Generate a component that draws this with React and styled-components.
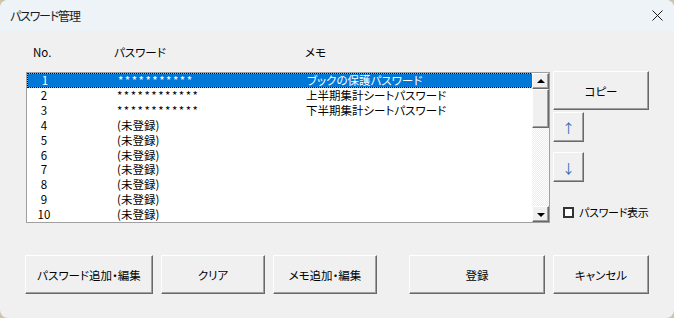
import React from "react"
import styled, { createGlobalStyle } from "styled-components"

const GlobalStyle = createGlobalStyle`
  html, body {
    margin: 0;
    padding: 0;
    background: #cdc4aa;
  }
  body {
    font-family: "Noto Sans CJK JP", "Noto Sans", sans-serif;
    font-feature-settings: "palt";
  }
`

const Window = styled.div`
  width: 674px;
  height: 318px;
  box-sizing: border-box;
  border-radius: 8px;
  overflow: hidden;
  background: #f0f0f0;
  display: flex;
  flex-direction: column;
`

const TitleBar = styled.div`
  height: 31px;
  flex: none;
  background: #eef3f8;
  display: flex;
  align-items: center;
  justify-content: space-between;
  padding: 0 11px 0 10px;
  font-size: 12px;
  letter-spacing: -1.2px;
  color: #1b1b1b;
`

const Body = styled.div`
  flex: 1;
  padding: 14px 25px 0 26px;
  display: flex;
  flex-direction: column;
  font-size: 11.5px;
  color: #000;
`

const HeaderRow = styled.div`
  display: grid;
  grid-template-columns: 81px 191px 1fr;
  padding-left: 7px;
  height: 14px;
  line-height: 14px;
  margin-bottom: 13px;
`

const MainRow = styled.div`
  display: flex;
  gap: 3px;
  align-items: flex-start;
`

const ListBox = styled.div`
  flex: none;
  width: 524px;
  height: 151px;
  box-sizing: border-box;
  border: 1px solid #a0a0a0;
  background: #fff;
  display: flex;
`

const Rows = styled.div`
  flex: 1;
  display: flex;
  flex-direction: column;
`

const Row = styled.div`
  display: grid;
  grid-template-columns: 90px 189px 1fr;
  height: 15px;
  line-height: 15px;
  box-sizing: border-box;
  white-space: nowrap;
  overflow: hidden;
  color: ${(p) => (p.$selected ? "#fff" : "#000")};
  ${(p) =>
    p.$selected &&
    `
    border: 1px dotted #000;
    line-height: 13px;
    margin: 0 -1px 0 0;
    background: linear-gradient(#0078d7, #0078d7) padding-box,
      linear-gradient(#e89a3c, #e89a3c) border-box;
  `}
`

const Num = styled.span`
  width: 34px;
  text-align: center;
`

const Stars = styled.span`
  letter-spacing: 1.5px;
`

const ScrollBar = styled.div`
  width: 17px;
  display: flex;
  flex-direction: column;
  background: repeating-conic-gradient(#fff 0 25%, #ececec 0 50%) 0 0 / 2px 2px;
`

const Bevel = styled.div`
  box-sizing: border-box;
  background: #f0f0f0;
  border-style: solid;
  border-width: 1px;
  border-color: #fff #696969 #696969 #fff;
  box-shadow: inset -1px -1px 0 #a0a0a0;
`

const ScrollButton = styled(Bevel)`
  height: 16px;
  display: flex;
  align-items: center;
  justify-content: center;
`

const Thumb = styled(Bevel)`
  height: 39px;
`

const Track = styled.div`
  flex: 1;
`

const Triangle = styled.span`
  width: 0;
  height: 0;
  border-left: 4px solid transparent;
  border-right: 4px solid transparent;
  ${(p) =>
    p.$down
      ? "border-top: 4px solid #000; margin-top: 1px;"
      : "border-bottom: 4px solid #000; margin-top: -1px;"}
`

const SideColumn = styled.div`
  flex: none;
  width: 96px;
  display: flex;
  flex-direction: column;
  align-items: flex-start;
  margin-top: -1px;
`

const Button = styled(Bevel)`
  width: ${(p) => p.$w}px;
  height: ${(p) => p.$h || 39}px;
  display: flex;
  align-items: center;
  justify-content: center;
  font-size: 11.5px;
  color: #000;
  margin-top: ${(p) => p.$mt || 0}px;
  margin-left: ${(p) => p.$ml || 0}px;
  flex: none;
`

const Arrow = styled.span`
  font-size: 13px;
  color: #2a6fb5;
`

const CheckRow = styled.label`
  display: flex;
  align-items: center;
  gap: 5px;
  margin: 24px 0 0 10px;
  height: 12px;
  font-size: 11px;
  letter-spacing: -0.3px;
  white-space: nowrap;
`

const Box = styled.span`
  flex: none;
  width: 11px;
  height: 11px;
  box-sizing: border-box;
  border: 2px solid #333;
  background: #fff;
`

const Footer = styled.div`
  display: flex;
  gap: 8px;
  margin: 32px 0 0 -1px;
`

const rows = [
  { n: 1, pw: "***********", memo: "ブックの保護パスワード" },
  { n: 2, pw: "************", memo: "上半期集計シートパスワード" },
  { n: 3, pw: "************", memo: "下半期集計シートパスワード" },
  ...[4, 5, 6, 7, 8, 9, 10].map((n) => ({ n, pw: "(未登録)", memo: "" })),
]

function CloseIcon() {
  return (
    <svg width="11" height="11" viewBox="0 0 11 11">
      <path d="M0.5 0.5L10.5 10.5M10.5 0.5L0.5 10.5" stroke="#1b1b1b" strokeWidth="1" fill="none" />
    </svg>
  )
}

export default function App() {
  return (
    <>
      <GlobalStyle />
      <Window>
        <TitleBar>
          <span>パスワード管理</span>
          <CloseIcon />
        </TitleBar>
        <Body>
          <HeaderRow>
            <span>No.</span>
            <span>パスワード</span>
            <span>メモ</span>
          </HeaderRow>
          <MainRow>
            <ListBox>
              <Rows>
                {rows.map((r) => (
                  <Row key={r.n} $selected={r.n === 1}>
                    <Num>{r.n}</Num>
                    {r.pw.startsWith("*") ? <Stars>{r.pw}</Stars> : <span>{r.pw}</span>}
                    <span>{r.memo}</span>
                  </Row>
                ))}
              </Rows>
              <ScrollBar>
                <ScrollButton>
                  <Triangle />
                </ScrollButton>
                <Thumb />
                <Track />
                <ScrollButton>
                  <Triangle $down />
                </ScrollButton>
              </ScrollBar>
            </ListBox>
            <SideColumn>
              <Button $w={96}>コピー</Button>
              <Button $w={31} $h={30} $mt={2}>
                <Arrow>↑</Arrow>
              </Button>
              <Button $w={31} $h={30} $mt={10}>
                <Arrow>↓</Arrow>
              </Button>
              <CheckRow>
                <Box />
                パスワード表示
              </CheckRow>
            </SideColumn>
          </MainRow>
          <Footer>
            <Button $w={128}>パスワード追加・編集</Button>
            <Button $w={104}>クリア</Button>
            <Button $w={104}>メモ追加・編集</Button>
            <Button $w={136} $ml={24}>登録</Button>
            <Button $w={96}>キャンセル</Button>
          </Footer>
        </Body>
      </Window>
    </>
  )
}
